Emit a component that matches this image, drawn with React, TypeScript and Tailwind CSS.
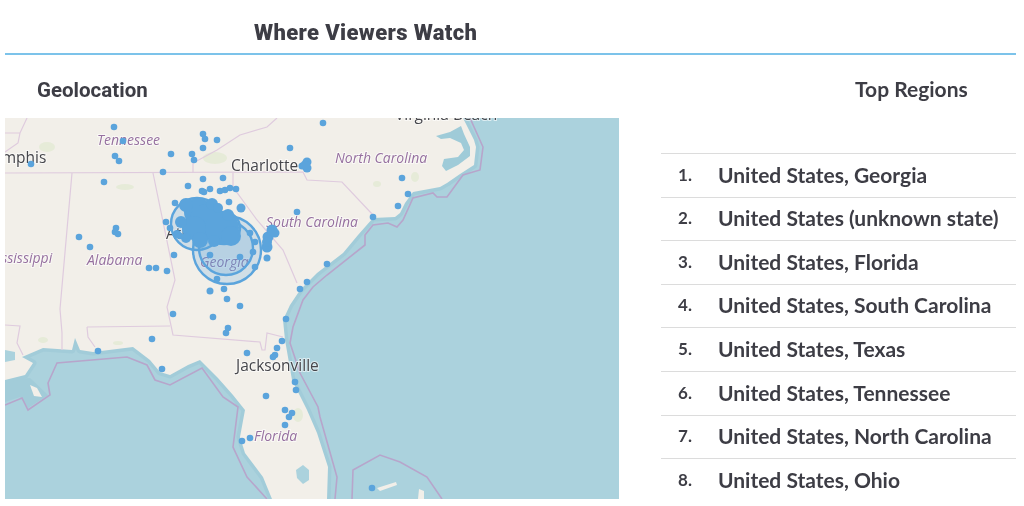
const regions = [
  "United States, Georgia",
  "United States (unknown state)",
  "United States, Florida",
  "United States, South Carolina",
  "United States, Texas",
  "United States, Tennessee",
  "United States, North Carolina",
  "United States, Ohio",
];

const land =
  "M5 118 L463 118 L466 124 L470 132 L474 140 L476 147 L474 165 L460 174 L447 183 L440 187 L413 192 L405 203 L400 213 L395 217 L373 218 L358 235 L343 253 L317 273 L300 290 L290 305 L283 320 L285 340 L292 380 L307 410 L317 433 L328 467 L327 499 L272 499 L263 477 L245 453 L240 437 L245 410 L233 395 L218 378 L200 360 L188 365 L170 375 L160 372 L150 360 L133 347 L93 352 L80 350 L75 338 L72 350 L43 348 L22 357 L33 363 L25 375 L5 380 Z";

const sea =
  "M5 405 L22 398 L28 410 L50 395 L48 383 L57 363 L127 357 L147 365 L155 380 L170 385 L202 368 L223 397 L238 407 L233 447 L247 477 L267 499";
const sea2 =
  "M470 118 L483 147 L480 170 L463 175 L447 197 L437 197 L433 193 L413 198 L403 220 L397 227 L388 223 L373 225 L365 235 L365 245 L327 275 L313 287 L303 300 L293 327 L290 343 L300 373 L318 407 L320 417 L337 477 L335 499";
const bahamas = "M352 499 L353 470 L380 455 L400 462 L427 477 L442 499";

const borders = [
  "M5 173 L303 172 L307 180 L342 182 L373 215",
  "M193 173 L193 163 L217 150 L240 135 L267 127 L277 118",
  "M72 173 L60 309 L62 333 L62 350",
  "M153 173 L175 280 L167 307 L173 335 L260 342 L262 350 L265 350 L267 333 L283 337",
  "M87 327 L170 326 M87 327 L88 337 L95 347",
  "M5 325 L20 326 L17 343 L23 355",
  "M233 173 L233 187 L257 220 L283 250 L297 283",
  "M5 133 L20 133 L27 118 M20 133 L18 143 L5 152",
];

const dots: [number, number, number?][] = [
  [114, 127], [123, 141], [115, 156], [119, 161], [31, 164], [171, 154], [163, 172], [203, 134], [205, 139],
  [217, 140], [203, 148], [192, 154], [194, 160], [290, 148], [104, 182], [203, 179], [223, 178], [188, 186],
  [202, 191], [204, 192], [210, 189], [220, 191], [225, 190], [230, 188], [236, 189], [175, 203], [229, 202],
  [241, 208, 4.5], [297, 212], [166, 222], [79, 237], [90, 247], [116, 228], [115, 232], [118, 234], [174, 255],
  [149, 268], [156, 268], [167, 271], [210, 291, 3.5], [224, 289], [227, 299], [240, 306], [217, 279], [240, 257],
  [210, 255], [255, 267], [267, 258, 3.5], [302, 166, 3.5], [307, 162, 4.5], [307, 168, 4.5], [305, 165, 4.5],
  [267, 247, 5.5], [268, 237, 5.5], [272, 230, 5.5], [275, 233, 4.5], [267, 242, 5], [300, 289], [307, 282], [323, 123],
  [402, 178], [408, 194], [398, 206], [373, 217], [327, 264], [173, 314], [213, 317], [228, 328], [226, 333],
  [152, 339], [98, 351], [162, 369], [286, 319], [282, 341], [277, 348], [247, 353], [275, 355], [273, 357],
  [295, 382], [296, 390], [266, 396], [285, 410], [292, 413], [289, 417], [285, 425], [250, 438], [242, 441],
  [372, 488], [250, 233], [255, 242], [253, 252], [170, 228], [180, 236],
];

// solid part of the Atlanta cluster
const blob: [number, number, number][] = [
  [198, 212, 14], [207, 222, 18], [222, 228, 17], [194, 228, 12], [212, 204, 6], [186, 205, 7], [181, 222, 6],
  [200, 240, 8], [214, 241, 6], [231, 236, 10], [228, 215, 6], [177, 234, 4], [186, 238, 5], [218, 208, 5],
];

const rings: [number, number, number][] = [
  [227, 250, 34],
  [226, 248, 27],
  [197, 224, 26],
  [224, 228, 16],
];

const greens = [
  [125, 187, 9, 3], [215, 158, 12, 6], [47, 147, 8, 5], [415, 177, 4, 5], [377, 184, 4, 3], [298, 415, 5, 7],
  [43, 340, 5, 3], [118, 343, 5, 2],
];

function MapLabel({ x, y, children, state }: { x: number; y: number; children: string; state?: boolean }) {
  return (
    <text
      x={x}
      y={y}
      fontFamily="'Open Sans', sans-serif"
      fontSize={state ? 14 : 15.5}
      fontStyle={state ? "italic" : "normal"}
      fill={state ? "#96709f" : "#45454a"}
      stroke="#ffffff"
      strokeOpacity={0.6}
      strokeWidth={2}
      paintOrder="stroke"
    >
      {children}
    </text>
  );
}

function GeoMap() {
  return (
    <div className="w-[614px] h-[381px] shrink-0 overflow-hidden">
      <svg viewBox="5 118 614 381" className="block w-full h-full">
        <rect x="5" y="118" width="614" height="381" fill="#abd2dd" />
        <path d="M5 380 L30 378 L48 395 L28 408 L20 397 L5 402 Z" fill="#a2ccd9" />
        <path d={land} fill="#a2ccd9" stroke="#a2ccd9" strokeWidth="7" strokeLinejoin="round" />
        <path d={land} fill="#f2efe9" />
        <path d="M30 385 L37 388 L42 397 L34 396 Z" fill="#f2efe9" />
        <path d="M436 136 L450 132 L461 126 L464 134 L470 147 L470 156 L458 165 L446 171 L442 166 L444 159 L458 157 L464 150 L461 143 L450 138 L441 139 Z" fill="#9fcbd8" />
        <path d="M5 350 L15 352 L15 360 L5 362 Z" fill="#abd2dd" />
        <path d="M296 470 L303 465 L309 470 L309 480 L303 484 L297 478 Z" fill="#abd2dd" />
        {greens.map(([x, y, rx, ry], i) => (
          <ellipse key={i} cx={x} cy={y} rx={rx} ry={ry} fill="#e6ebd8" />
        ))}
        <path d="M377 488 L396 482 L397 485 L380 491 Z M419 489 L424 491 L424 499 L418 499 Z" fill="#f2efe9" />
        <path d={sea} fill="none" stroke="#b7a5cb" strokeWidth="1.6" />
        <path d={sea2} fill="none" stroke="#b7a5cb" strokeWidth="1.6" />
        <path d={bahamas} fill="none" stroke="#b7a5cb" strokeWidth="1.6" />
        {borders.map((d, i) => (
          <path key={i} d={d} fill="none" stroke="#dfcbde" strokeWidth="1.2" />
        ))}
        <MapLabel x={-21} y={163}>Memphis</MapLabel>
        <MapLabel x={231} y={171}>Charlotte</MapLabel>
        <MapLabel x={166} y={239}>Atlanta</MapLabel>
        <MapLabel x={236} y={371}>Jacksonville</MapLabel>
        <MapLabel x={395} y={120}>Virginia Beach</MapLabel>
        <MapLabel state x={97} y={145}>Tennessee</MapLabel>
        <MapLabel state x={335} y={163}>North Carolina</MapLabel>
        <MapLabel state x={266} y={227}>South Carolina</MapLabel>
        <MapLabel state x={87} y={265}>Alabama</MapLabel>
        <MapLabel state x={-14} y={263}>Mississippi</MapLabel>
        <MapLabel state x={200} y={267}>Georgia</MapLabel>
        <MapLabel state x={254} y={441}>Florida</MapLabel>
        {rings.map(([x, y, r], i) => (
          <circle key={i} cx={x} cy={y} r={r} fill="#5ba4dc" fillOpacity={0.22} stroke="#5ba4dc" strokeWidth="2.4" />
        ))}
        {blob.map(([x, y, r], i) => (
          <circle key={i} cx={x} cy={y} r={r} fill="#5ba4dc" />
        ))}
        {dots.map(([x, y, r], i) => (
          <circle key={i} cx={x} cy={y} r={r ?? 3.3} fill="#5ba4dc" />
        ))}
      </svg>
    </div>
  );
}

export default function App() {
  return (
    <div className="w-full h-[506px] bg-white overflow-hidden text-[#3d3d45] blur-[0.5px]">
      <div className="ml-[5px] mr-[8px] h-[55px] border-b-2 border-[#7cc3ea] pl-[249px] pt-[18px]">
        <h1 className="font-['Roboto',sans-serif] font-black text-[22px] leading-[30px] tracking-[0.35px]">
          Where Viewers Watch
        </h1>
      </div>

      <div className="flex pl-[5px] pr-[8px]">
        <div className="w-[614px] shrink-0">
          <h2 className="font-['Roboto',sans-serif] font-bold text-[20.5px] leading-[26px] pl-[32px] pt-[22px] pb-[15px]">
            Geolocation
          </h2>
          <GeoMap />
        </div>

        <div className="ml-[42px] flex-1">
          <h2 className="font-['Lato',sans-serif] font-bold text-[21px] leading-[26px] pl-[194px] pt-[21px] pb-[51px]">
            Top Regions
          </h2>
          <ol className="border-t border-[#dcdcdc]">
            {regions.map((name, i) => (
              <li
                key={name}
                className="flex items-center h-[43.6px] pb-[2px] border-b border-[#dcdcdc] last:border-b-0 font-['Lato',sans-serif] font-bold text-[21px]"
              >
                <span className="w-[57px] pl-[17px] shrink-0 text-[17px]">{i + 1}.</span>
                <span className="whitespace-nowrap">{name}</span>
              </li>
            ))}
          </ol>
        </div>
      </div>
    </div>
  );
}
